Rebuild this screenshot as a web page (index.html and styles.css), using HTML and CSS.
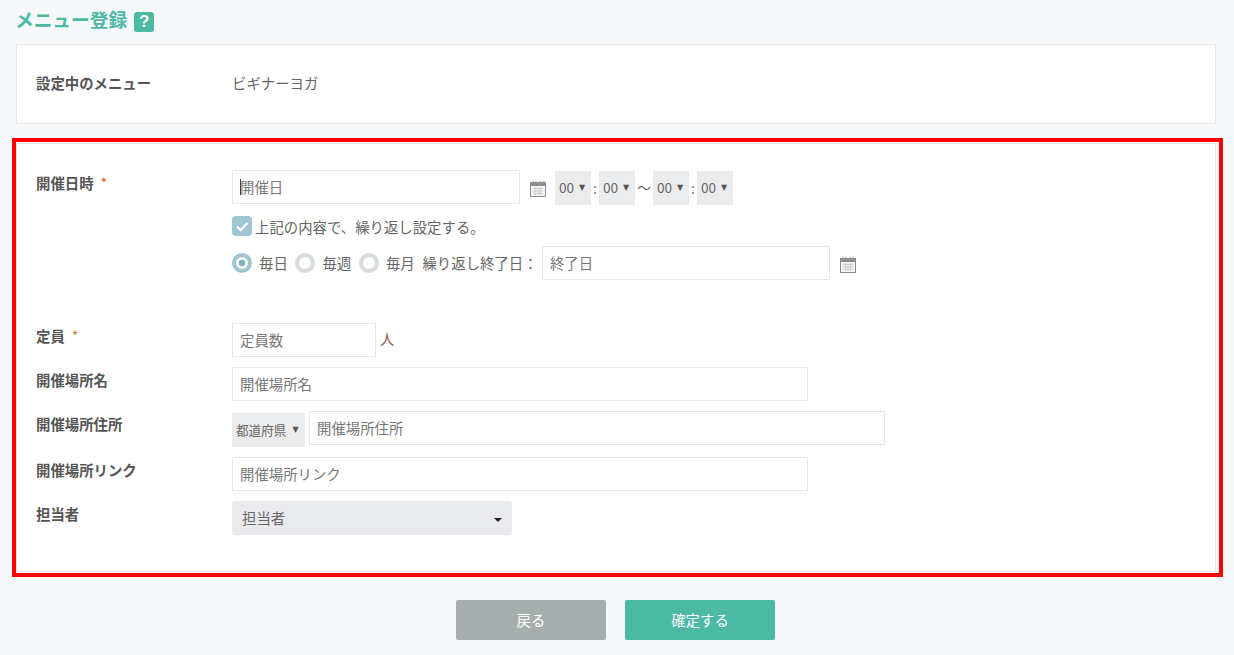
FILE: index.html
```html
<!DOCTYPE html>
<html lang="ja">
<head>
<meta charset="utf-8">
<title>メニュー登録</title>
<link rel="stylesheet" href="styles.css">
</head>
<body>
<svg class="defs" width="0" height="0" aria-hidden="true">
  <symbol id="cal" viewBox="0 0 16 16">
    <rect x="0" y="1" width="16" height="15" fill="#8c8c8c"/>
    <rect x="1" y="5" width="14" height="10" fill="#f4f4f4"/>
    <path d="M3 0v3M6 0v3M10 0v3M13 0v3" stroke="#9a9a9a" stroke-width="1"/>
    <path d="M3 7.5h10M3 10h10M3 12.5h10M5.5 6v8M8 6v8M10.5 6v8" stroke="#cfcfcf" stroke-width="1"/>
  </symbol>
</svg>
<main class="page">
  <h1 class="title">メニュー登録<span class="help">?</span></h1>

  <section class="card menu-card">
    <div class="label">設定中のメニュー</div>
    <div class="value">ビギナーヨガ</div>
  </section>

  <div class="highlight">
    <section class="card form-card">
      <div class="row row-date">
        <div class="label label-f">開催日時<span class="req">*</span></div>
        <div class="stack">
          <div class="line">
            <span class="caret-wrap"><input class="input w288" placeholder="開催日"><i class="caret"></i></span>
            <svg class="cal"><use href="#cal"/></svg>
            <span class="sel time">00<b class="arrow">▼</b></span>
            <span class="colon">:</span>
            <span class="sel time">00<b class="arrow">▼</b></span>
            <span class="tilde">〜</span>
            <span class="sel time">00<b class="arrow">▼</b></span>
            <span class="colon">:</span>
            <span class="sel time">00<b class="arrow">▼</b></span>
          </div>
          <div class="check-line">
            <span class="check"><svg viewBox="0 0 20 20" width="20" height="20"><path d="M5 10.5l3.6 3.5L15.5 7" fill="none" stroke="#fff" stroke-width="2.4"/></svg></span>
            <span>上記の内容で、繰り返し設定する。</span>
          </div>
          <div class="radio-line">
            <span class="radio on"></span><span class="rtext">毎日</span>
            <span class="radio"></span><span class="rtext">毎週</span>
            <span class="radio"></span><span class="rtext">毎月</span>
            <span class="endlabel">繰り返し終了日：</span>
            <input class="input w288" placeholder="終了日">
            <svg class="cal"><use href="#cal"/></svg>
          </div>
        </div>
      </div>

      <div class="row row-cap">
        <div class="label label-f">定員<span class="req req2">*</span></div>
        <div class="line"><input class="input w144" placeholder="定員数"><span class="unit">人</span></div>
      </div>
      <div class="row row-place">
        <div class="label label-f">開催場所名</div>
        <input class="input w576" placeholder="開催場所名">
      </div>
      <div class="row row-addr">
        <div class="label label-f">開催場所住所</div>
        <div class="line">
          <span class="sel pref">都道府県<b class="arrow">▼</b></span>
          <input class="input w576" placeholder="開催場所住所">
        </div>
      </div>
      <div class="row row-link">
        <div class="label label-f">開催場所リンク</div>
        <input class="input w576" placeholder="開催場所リンク">
      </div>
      <div class="row row-staff">
        <div class="label label-f">担当者</div>
        <div class="staff">担当者<span class="staff-arrow"></span></div>
      </div>
    </section>
  </div>

  <div class="actions">
    <button class="btn back">戻る</button>
    <button class="btn ok">確定する</button>
  </div>
</main>
</body>
</html>
```

FILE: styles.css
```css
* { box-sizing: border-box; }
html, body { margin: 0; height: 100%; }
body {
  background: #f6f8fa;
  font-family: "Noto Sans CJK JP", "Noto Sans", sans-serif;
  font-size: 14.4px;
  color: #666;
  overflow: hidden;
}
.defs { position: absolute; }
.page { padding: 0 11px 0 12px; }
.title {
  display: flex;
  align-items: center;
  margin: 0 0 0 3px;
  height: 44px;
  padding-bottom: 8px;
  font-size: 18.7px;
  font-weight: 700;
  color: #4cb9a5;
}
.help {
  display: flex;
  align-items: center;
  justify-content: center;
  width: 20px;
  height: 20px;
  margin-left: 7px;
  margin-top: 8px;
  border-radius: 3px;
  background: #4cb9a5;
  color: #fff;
  font-family: "Liberation Sans", sans-serif;
  font-size: 17px;
  font-weight: 700;
}
.card {
  background: #fff;
  border: 1px solid #e4e8ec;
  width: 1200px;
}
.menu-card {
  display: flex;
  align-items: center;
  height: 80px;
  margin-left: 4px;
  padding-left: 20px;
  padding-bottom: 3px;
}
.label {
  width: 195px;
  flex: none;
  font-weight: 700;
  color: #555;
  line-height: 20px;
  text-indent: -1px;
}
.value { color: #666; }
.highlight {
  margin-top: 14px;
  height: 439px;
  border: 4px solid #f00;
  padding-top: 1px;
  background: #f6f8fa;
}
.form-card {
  height: 429px;
  padding: 26px 20px 0;
}
.row { display: flex; align-items: flex-start; }
.label-f { padding-top: 3px; }
.req { color: #e25b3c; margin-left: 7px; font-weight: 400; }
.req2 { color: #c98a3c; }
.stack { display: flex; flex-direction: column; }
.line { display: flex; align-items: flex-start; }
.input {
  height: 34px;
  padding: 0 7px 2px;
  border: 1px solid #e4e8ec;
  border-radius: 0;
  background: #fff;
  font: inherit;
  color: #666;
  outline: none;
}
.input::placeholder { color: #777; opacity: 1; }
.w288 { width: 288px; }
.w144 { width: 144px; }
.w576 { width: 576px; }
.caret-wrap { position: relative; display: block; height: 34px; }
.caret {
  position: absolute;
  left: 8px;
  top: 9px;
  width: 1px;
  height: 16px;
  background: #444;
}
.cal { width: 16px; height: 16px; flex: none; margin: 11px 9px 0 10px; }
.sel {
  display: flex;
  align-items: center;
  height: 34px;
  padding-bottom: 2px;
  background: #ebecee;
  color: #666;
  flex: none;
}
.time { width: 36px; margin-top: 1px; padding-left: 4px; font-size: 13.6px; }
.arrow {
  font-family: "DejaVu Sans", sans-serif;
  font-size: 8px;
  font-weight: 400;
  color: #555;
  margin-left: 5px;
}
.colon, .tilde {
  display: flex;
  align-items: center;
  justify-content: center;
  height: 34px;
  margin-top: 1px;
  padding-bottom: 2px;
}
.colon { width: 8px; color: #777; }
.tilde { width: 16px; margin: 1px 1px 0; font-size: 14px; }
.check-line {
  display: flex;
  align-items: center;
  height: 20px;
  margin-top: 11px;
}
.check {
  width: 20px;
  height: 20px;
  border-radius: 4px;
  background: #9ec5d1;
  margin-right: 3px;
  display: block;
}
.check svg { display: block; }
.radio-line {
  display: flex;
  align-items: center;
  margin-top: 10px;
}
.radio-line .cal { margin-top: 4px; }
.radio {
  width: 20px;
  height: 20px;
  border-radius: 50%;
  border: 4px solid #d5dcde;
  background: #fff;
  flex: none;
  margin-right: 7px;
}
.radio.on {
  border-color: #9ec5d1;
  background: radial-gradient(circle, #7fb0c0 0 3px, #fff 3.6px);
}
.rtext { margin-right: 7.7px; padding-bottom: 2px; }
.endlabel { margin-right: 4.3px; padding-bottom: 2px; white-space: nowrap; }
.row-cap { margin-top: 43px; }
.unit { margin-left: 4px; margin-top: 6px; line-height: 20px; color: #8a5a44; }
.row-place { margin-top: 10px; }
.row-addr { margin-top: 10px; }
.pref { width: 73px; margin-top: 2px; padding-left: 4px; font-size: 12.6px; margin-right: 4px; }
.pref .arrow { margin-left: 6px; }
.row-link { margin-top: 10px; }
.row-staff { margin-top: 10px; }
.staff {
  position: relative;
  display: flex;
  align-items: center;
  width: 280px;
  height: 34px;
  padding: 0 0 1px 10px;
  border-radius: 3px;
  background: #e9eaee;
  color: #666;
}
.staff-arrow {
  position: absolute;
  right: 10px;
  top: 17px;
  border-style: solid;
  border-width: 4px 4px 0;
  border-color: #222 transparent transparent;
}
.actions {
  display: flex;
  justify-content: center;
  gap: 19px;
  margin-top: 23px;
  padding-right: 4px;
}
.btn {
  width: 150px;
  height: 40px;
  padding: 0 0 1px;
  border: 0;
  border-radius: 2px;
  font: inherit;
  color: #fff;
}
.back { background: #a5adad; }
.ok { background: #4cb9a5; }
```
